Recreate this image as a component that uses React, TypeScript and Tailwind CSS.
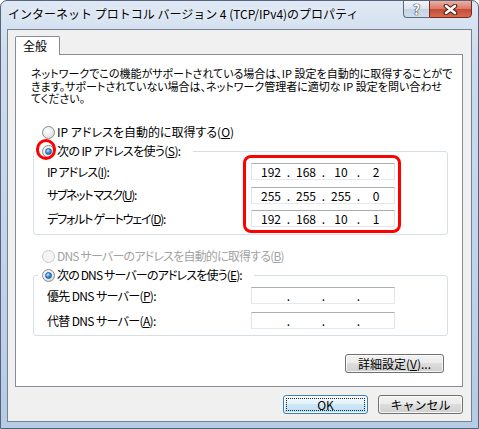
import { Fragment, type ReactNode } from "react";

const FONT = "font-['Noto_Sans_CJK_JP','Noto_Sans',sans-serif]";

function Radio({ checked = false, disabled = false }: { checked?: boolean; disabled?: boolean }) {
  return (
    <span
      className={`flex h-[13px] w-[13px] shrink-0 items-center justify-center rounded-full border ${
        disabled
          ? "border-[#c9cacb] bg-[#f4f4f4]"
          : "border-[#8a8c8f] bg-[radial-gradient(circle_at_40%_35%,#ffffff_0%,#eeeeee_45%,#cfcfcf_100%)]"
      }`}
    >
      {checked && (
        <span className="h-[7px] w-[7px] rounded-full border border-[#1d5b99] bg-[radial-gradient(circle_at_35%_30%,#c4ecff_0%,#3c9ae6_45%,#0b4f96_100%)]" />
      )}
    </span>
  );
}

function RadioRow({
  checked,
  disabled,
  className = "",
  children,
}: {
  checked?: boolean;
  disabled?: boolean;
  className?: string;
  children: ReactNode;
}) {
  return (
    <div className={`flex h-[16px] items-center gap-[2px] ${disabled ? "text-[#a3a3a3]" : "text-black"}`}>
      <Radio checked={checked} disabled={disabled} />
      <span className={`whitespace-nowrap leading-[16px] ${className}`}>{children}</span>
    </div>
  );
}

function IpBox({ octets = ["", "", "", ""] }: { octets?: string[] }) {
  return (
    <div className="flex h-[17px] w-[144px] items-center border border-[#e2e3ea] border-t-[#abadb3] border-b-[#e3e9ef] bg-white pl-[4px] leading-[15px]">
      {octets.map((o, i) => (
        <Fragment key={i}>
          <span className="w-[30px] text-center">{o}</span>
          {i < 3 && <span className="w-[5px] text-center">.</span>}
        </Fragment>
      ))}
    </div>
  );
}

function FieldRow({ label, octets, className = "" }: { label: ReactNode; octets?: string[]; className?: string }) {
  return (
    <div className="flex h-[17px] items-center">
      <span className={`w-[204px] whitespace-nowrap leading-[16px] ${className}`}>{label}</span>
      <IpBox octets={octets} />
    </div>
  );
}

function Button({ children, primary, className = "" }: { children: ReactNode; primary?: boolean; className?: string }) {
  return (
    <button
      className={`relative flex h-[19px] items-center justify-center rounded-[3px] border text-[12px] leading-[16px] text-black shadow-[inset_0_0_0_1px_rgba(255,255,255,0.8)] ${
        primary
          ? "border-[#3c7fb1] bg-[linear-gradient(#f3f9fd_0%,#e3f2fb_50%,#cde7f7_50%,#bcdff3_100%)]"
          : "border-[#707070] bg-[linear-gradient(#f2f2f2_0%,#ebebeb_50%,#dddddd_50%,#cfcfcf_100%)]"
      } ${className}`}
    >
      {primary && <span className="absolute inset-[2px] border border-dotted border-[#222]" />}
      {children}
    </button>
  );
}

export default function App() {
  return (
    <div
      className={`${FONT} flex h-[429px] w-[479px] flex-col overflow-hidden rounded-t-[7px] border border-[#55647a] bg-[linear-gradient(#dfe8f4_0%,#cddcee_12%,#c2d4ea_60%,#b6cbe4_100%)] text-[12px] text-black`}
    >
      {/* title bar */}
      <div className="flex h-[28px] items-start justify-between">
        <span className="whitespace-nowrap pl-[7px] pt-[5px] leading-[16px] [text-shadow:0_0_6px_#ffffff]">
          インターネット プロトコル バージョン 4 (TCP/IPv4)のプロパティ
        </span>
        <div className="-mt-px mr-[6px] flex h-[18px]">
          <div className="flex w-[26px] items-center justify-center rounded-bl-[4px] border border-r-0 border-[#5e6b7d] bg-[linear-gradient(#f1f5fa_0%,#dbe4ef_50%,#c4d2e4_50%,#d2deec_100%)]">
            <span className="text-[14px] font-bold leading-[16px] text-white [text-shadow:0_0_1px_#2c3644,0_0_1px_#2c3644,0_0_1px_#2c3644]">
              ?
            </span>
          </div>
          <div className="flex w-[43px] items-center justify-center rounded-br-[4px] border border-[#7d2a1c] bg-[linear-gradient(#eab1a2_0%,#d9786a_50%,#c44a33_50%,#d76a52_100%)]">
            <svg width="15" height="11" viewBox="0 0 15 11">
              <path d="M3 2 L12 9 M12 2 L3 9" stroke="#4a1a12" strokeWidth="4.6" strokeLinecap="round" />
              <path d="M3 2 L12 9 M12 2 L3 9" stroke="#ffffff" strokeWidth="2.6" strokeLinecap="round" />
            </svg>
          </div>
        </div>
      </div>

      {/* client area */}
      <div className="mx-[6px] mb-[6px] flex flex-1 flex-col border border-[#76838f] bg-[#f0f0f0] pt-[6px]">
        <div className="flex pl-[7px]">
          <div className="relative z-10 -mb-px h-[19px] w-[45px] rounded-t-[2px] border border-b-0 border-[#898c95] bg-white pl-[7px] leading-[18px]">
            全般
          </div>
        </div>

        <div className="relative ml-[7px] flex h-[333px] w-[448px] flex-col border border-[#898c95] bg-white [font-feature-settings:'palt']">
          <p className="whitespace-nowrap pl-[15px] pt-[12px] text-[11px] leading-[12.5px]">
            ネットワークでこの機能がサポートされている場合は、IP 設定を自動的に取得することがで
            <br />
            きます。サポートされていない場合は、ネットワーク管理者に適切な IP 設定を問い合わせ
            <br />
            てください。
          </p>

          <div className="mt-[19.5px] pl-[26px]">
            <RadioRow>
              IP アドレスを自動的に取得する(<u>O</u>)
            </RadioRow>
          </div>

          <fieldset className="ml-[17px] mr-[14px] mt-[3px] rounded-[3px] border border-[#d5dfe5] p-0 pb-[7px]">
            <legend className="ml-[4px] pl-[4px] pr-[12px]">
              <RadioRow checked className="tracking-[-0.6px]">
                次の IP アドレスを使う(<u>S</u>):
              </RadioRow>
            </legend>
            <div className="mt-[4px] flex flex-col gap-[6.5px] pl-[13px]">
              <FieldRow
                className="tracking-[-0.8px]"
                label={<>IP アドレス(<u>I</u>):</>}
                octets={["192", "168", "10", "2"]}
              />
              <FieldRow
                className="tracking-[-1.4px]"
                label={<>サブネット マスク(<u>U</u>):</>}
                octets={["255", "255", "255", "0"]}
              />
              <FieldRow
                className="tracking-[-1.2px]"
                label={<>デフォルト ゲートウェイ(<u>D</u>):</>}
                octets={["192", "168", "10", "1"]}
              />
            </div>
          </fieldset>

          <div className="mt-[13px] pl-[26px]">
            <RadioRow disabled className="tracking-[-0.8px]">
              DNS サーバーのアドレスを自動的に取得する(<u>B</u>)
            </RadioRow>
          </div>

          <fieldset className="ml-[17px] mr-[14px] mt-[3px] rounded-[3px] border border-[#d5dfe5] p-0 pb-[6px]">
            <legend className="ml-[4px] pl-[4px] pr-[12px]">
              <RadioRow checked className="tracking-[-0.85px]">
                次の DNS サーバーのアドレスを使う(<u>E</u>):
              </RadioRow>
            </legend>
            <div className="mt-[4px] flex flex-col gap-[8px] pl-[13px]">
              <FieldRow className="tracking-[-0.65px]" label={<>優先 DNS サーバー(<u>P</u>):</>} />
              <FieldRow className="tracking-[-0.65px]" label={<>代替 DNS サーバー(<u>A</u>):</>} />
            </div>
          </fieldset>

          <div className="mt-[18px] flex justify-end pr-[18px]">
            <Button className="w-[99px]">
              詳細設定(<u>V</u>)...
            </Button>
          </div>

          {/* red annotation marks */}
          <span className="pointer-events-none absolute left-[20px] top-[84px] h-[21px] w-[20px] rounded-full border-[3px] border-[#ff0000]" />
          <span className="pointer-events-none absolute left-[227px] top-[100px] h-[78px] w-[158px] rounded-[8px] border-[3px] border-[#ff0000]" />
        </div>

        <div className="mt-[8px] flex justify-end gap-[10px] pr-[8px]">
          <Button primary className="w-[85px]">
            OK
          </Button>
          <Button className="w-[85px]">キャンセル</Button>
        </div>
      </div>
    </div>
  );
}
